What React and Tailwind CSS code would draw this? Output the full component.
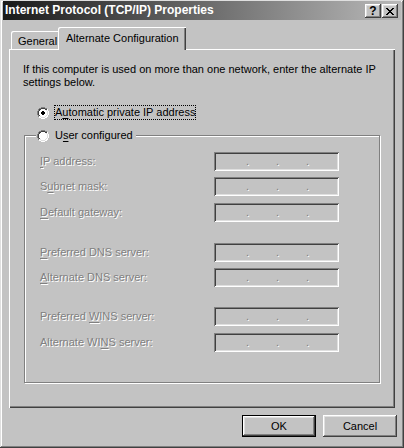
import React from "react";

const raised =
  "shadow-[inset_-1px_-1px_0_#404040,inset_1px_1px_0_#ffffff,inset_-2px_-2px_0_#808080,inset_2px_2px_0_#dfdfdf]";
const sunken =
  "shadow-[inset_1px_1px_0_#808080,inset_-1px_-1px_0_#ffffff,inset_2px_2px_0_#404040,inset_-2px_-2px_0_#dfdfdf]";

function Radio({ checked }) {
  return (
    <svg width="12" height="12" viewBox="0 0 12 12" className="shrink-0">
      <path d="M4 0h4v1h2v1h1v2h1v4h-1v2h-1v1h-2v1h-4v-1h-2v-1h-1v-2h-1v-4h1v-2h1v-1h2z" fill="#ffffff" />
      <path d="M4 0h4v1h-4zM2 1h2v1h-2zM8 1h2v1h-2zM1 2h1v2h-1zM0 4h1v4h-1zM1 8h1v2h-1z" fill="#808080" />
      <path d="M4 1h4v1h-4zM2 2h2v1h-2zM8 2h2v1h-2zM2 3h1v1h-1zM1 4h1v4h-1zM2 8h1v1h-1z" fill="#404040" />
      <path d="M10 2h1v2h-1zM11 4h1v4h-1zM10 8h1v2h-1zM8 10h2v1h-2zM2 10h2v1h-2zM4 11h4v1h-4z" fill="#ffffff" />
      <path d="M9 3h1v1h-1zM10 4h1v4h-1zM9 8h1v1h-1zM8 9h1v1h-1zM3 9h1v1h-1zM4 10h4v1h-4z" fill="#dfdfdf" />
      {checked && <path d="M5 4h2v1h1v2h-1v1h-2v-1h-1v-2h1z" fill="#000000" />}
    </svg>
  );
}

function U({ children }) {
  return <span className="underline underline-offset-[2px]">{children}</span>;
}

function IpBox() {
  const dot = "w-[3px] text-center";
  return (
    <div className={`w-[125px] h-[19px] ${sunken} flex items-center pl-[2px] text-[#808080] [text-shadow:1px_1px_0_#ffffff] leading-[19px]`}>
      <div className="w-[30px]" />
      <div className={dot}>.</div>
      <div className="w-[27px]" />
      <div className={dot}>.</div>
      <div className="w-[27px]" />
      <div className={dot}>.</div>
    </div>
  );
}

function Row({ label, mt }) {
  return (
    <div className={`flex items-center h-[19px] ${mt}`}>
      <div className="w-[189px] pl-[15px] text-[#808080] [text-shadow:1px_1px_0_#ffffff]">{label}</div>
      <IpBox />
    </div>
  );
}

export default function App() {
  return (
    <div
      className={`w-[404px] h-[448px] bg-[#c3c3c3] pt-[1px] px-[3px] text-[11px] text-black font-['Liberation_Sans',Arial,sans-serif] shadow-[inset_-1px_-1px_0_#404040,inset_1px_1px_0_#dfdfdf,inset_-2px_-2px_0_#808080,inset_2px_2px_0_#ffffff] flex flex-col`}
    >
      {/* Title bar */}
      <div className="h-[19px] bg-[linear-gradient(to_right,#1a1a1a,#b9b9b9)] flex items-center pl-[2px] pr-[3px]">
        <div className="flex-1 text-white font-bold text-[12px] leading-[19px]">
          Internet Protocol (TCP/IP) Properties
        </div>
        <div className="flex gap-[1px] pt-[1px]">
          <div className={`w-[16px] h-[14px] bg-[#c3c3c3] ${raised} flex items-center justify-center font-bold text-[12px] leading-none`}>?</div>
          <div className={`w-[16px] h-[14px] bg-[#c3c3c3] ${raised} flex items-center justify-center`}>
            <svg width="8" height="7" viewBox="0 0 8 7">
              <path d="M0 0h2v1h1v1h2v-1h1v-1h2v1h-1v1h-1v1h-1v1h1v1h1v1h1v1h-2v-1h-1v-1h-2v1h-1v1h-2v-1h1v-1h1v-1h1v-1h-1v-1h-1v-1h-1z" fill="#000" />
            </svg>
          </div>
        </div>
      </div>

      {/* Tabs */}
      <div className="flex items-end h-[22px] mt-[7px] ml-[8px] relative z-10">
        <div className="w-[49px] h-[18px] pt-[2px] pl-[7px] leading-[16px] shadow-[inset_1px_1px_0_#ffffff,inset_-1px_0_0_#404040,inset_-2px_0_0_#808080] rounded-tl-[2px]">
          General
        </div>
        <div className="-ml-[2px] w-[128px] h-[23px] -mb-[1px] bg-[#c3c3c3] pl-[8px] pt-[4px] leading-[14px] shadow-[inset_1px_1px_0_#ffffff,inset_-1px_0_0_#404040,inset_-2px_0_0_#808080] rounded-tl-[2px]">
          Alternate Configuration
        </div>
      </div>

      {/* Panel */}
      <div className="ml-[6px] mr-[6px] h-[359px] shadow-[inset_1px_1px_0_#ffffff,inset_-1px_-1px_0_#404040,inset_-2px_-2px_0_#808080] flex flex-col">
        <p className="mt-[14px] ml-[14px] leading-[13px]">
          If this computer is used on more than one network, enter the alternate IP
          <br />
          settings below.
        </p>

        <div className="mt-[16px] ml-[28px] flex items-center h-[15px]">
          <Radio checked />
          <div className="ml-[5px] px-[1px] h-[15px] leading-[15px] outline outline-1 outline-dotted outline-black -outline-offset-1">
            A<U>u</U>tomatic private IP address
          </div>
        </div>

        <div className="relative mt-[15px] ml-[15px] w-[356px] h-[248px] border border-[#808080] shadow-[1px_1px_0_#ffffff,inset_1px_1px_0_#ffffff] pt-[16px]">
          <div className="absolute -top-[8px] left-[11px] flex items-center h-[15px] bg-[#c3c3c3] pl-[1px] pr-[3px]">
            <Radio />
            <span className="ml-[6px]">U<U>s</U>er configured</span>
          </div>
          <Row label={<><U>I</U>P address:</>} mt="" />
          <Row label={<>S<U>u</U>bnet mask:</>} mt="mt-[6px]" />
          <Row label={<><U>D</U>efault gateway:</>} mt="mt-[7px]" />
          <Row label={<><U>P</U>referred DNS server:</>} mt="mt-[21px]" />
          <Row label={<><U>A</U>lternate DNS server:</>} mt="mt-[6px]" />
          <Row label={<>Preferred <U>W</U>INS server:</>} mt="mt-[20px]" />
          <Row label={<>Alternate WI<U>N</U>S server:</>} mt="mt-[7px]" />
        </div>
      </div>

      {/* Buttons */}
      <div className="flex justify-end gap-[7px] mt-[7px] mr-[4px]">
        <div className={`w-[74px] h-[22px] border border-black bg-[#c3c3c3] ${raised} flex items-center justify-center`}>OK</div>
        <div className={`w-[74px] h-[22px] bg-[#c3c3c3] ${raised} flex items-center justify-center`}>Cancel</div>
      </div>
    </div>
  );
}
